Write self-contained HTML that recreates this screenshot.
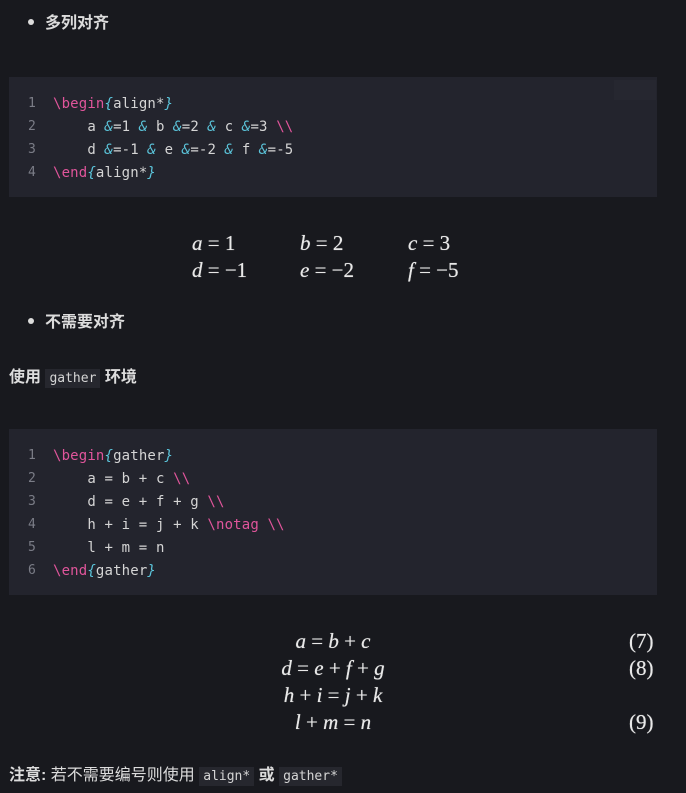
<!DOCTYPE html>
<html><head><meta charset="utf-8"><style>
body{margin:0;background:#18191e;color:#d8d8d8;font-family:"Liberation Sans","Noto Sans CJK SC",sans-serif;width:686px;height:793px;overflow:hidden;position:relative}
.a{position:absolute;white-space:nowrap}
.t{font-size:16px;font-weight:bold;color:#dcdcdc}
.dot{position:absolute;width:6px;height:6px;border-radius:50%;background:#dcdcdc}
.code{position:absolute;left:9px;width:648px;background:#23242d}
.ln{position:absolute;left:28px;font-family:"DejaVu Sans Mono",monospace;font-size:13px;color:#7b7d87}
.cl{position:absolute;left:53px;font-family:"DejaVu Sans Mono",monospace;font-size:14px;letter-spacing:0.15px;color:#d5d5d5;white-space:pre}
.k{color:#e0559b}.b{color:#5bc4da;font-style:italic}
.m{font-family:"Liberation Serif",serif;font-size:21px;color:#e8e8e8;text-shadow:0 0 0.6px #e8e8e8}
.m i{font-style:italic}
.ic{font-family:"DejaVu Sans Mono",monospace;font-size:13px;background:#26272e;padding:2px 4px;font-weight:normal;color:#d5d5d5}
</style></head><body>
<div class="dot" style="left:28px;top:19px"></div>
<div class="a t" style="left:45px;top:9px">多列对齐</div>

<div class="code" style="top:77px;height:120px"></div>
<div style="position:absolute;left:614px;top:80px;width:42px;height:20px;background:#262730"></div>
<div class="ln" style="top:96px">1</div><div class="cl" style="top:96px"><span class="k">\begin</span><span class="b">{</span>align*<span class="b">}</span></div>
<div class="ln" style="top:119px">2</div><div class="cl" style="top:119px">    a <span class="b">&amp;</span>=1 <span class="b">&amp;</span> b <span class="b">&amp;</span>=2 <span class="b">&amp;</span> c <span class="b">&amp;</span>=3 <span class="k">\\</span></div>
<div class="ln" style="top:142px">3</div><div class="cl" style="top:142px">    d <span class="b">&amp;</span>=-1 <span class="b">&amp;</span> e <span class="b">&amp;</span>=-2 <span class="b">&amp;</span> f <span class="b">&amp;</span>=-5</div>
<div class="ln" style="top:165px">4</div><div class="cl" style="top:165px"><span class="k">\end</span><span class="b">{</span>align*<span class="b">}</span></div>

<div class="a m" style="left:192px;top:231px"><i>a</i> = 1</div>
<div class="a m" style="left:300px;top:231px"><i>b</i> = 2</div>
<div class="a m" style="left:408px;top:231px"><i>c</i> = 3</div>
<div class="a m" style="left:192px;top:258px"><i>d</i> = −1</div>
<div class="a m" style="left:300px;top:258px"><i>e</i> = −2</div>
<div class="a m" style="left:408px;top:258px"><i>f</i> = −5</div>

<div class="dot" style="left:28px;top:318px"></div>
<div class="a t" style="left:45px;top:308px">不需要对齐</div>
<div class="a t" style="left:9px;top:363px">使用 <span class="ic">gather</span> 环境</div>

<div class="code" style="top:429px;height:166px"></div>
<div class="ln" style="top:448px">1</div><div class="cl" style="top:448px"><span class="k">\begin</span><span class="b">{</span>gather<span class="b">}</span></div>
<div class="ln" style="top:471px">2</div><div class="cl" style="top:471px">    a = b + c <span class="k">\\</span></div>
<div class="ln" style="top:494px">3</div><div class="cl" style="top:494px">    d = e + f + g <span class="k">\\</span></div>
<div class="ln" style="top:517px">4</div><div class="cl" style="top:517px">    h + i = j + k <span class="k">\notag \\</span></div>
<div class="ln" style="top:540px">5</div><div class="cl" style="top:540px">    l + m = n</div>
<div class="ln" style="top:563px">6</div><div class="cl" style="top:563px"><span class="k">\end</span><span class="b">{</span>gather<span class="b">}</span></div>

<div class="a m" style="left:0;width:666px;text-align:center;top:629px"><i>a</i> = <i>b</i> + <i>c</i></div>
<div class="a m" style="left:0;width:666px;text-align:center;top:656px"><i>d</i> = <i>e</i> + <i>f</i> + <i>g</i></div>
<div class="a m" style="left:0;width:666px;text-align:center;top:683px"><i>h</i> + <i>i</i> = <i>j</i> + <i>k</i></div>
<div class="a m" style="left:0;width:666px;text-align:center;top:710px"><i>l</i> + <i>m</i> = <i>n</i></div>
<div class="a m" style="left:629px;top:629px">(7)</div>
<div class="a m" style="left:629px;top:656px">(8)</div>
<div class="a m" style="left:629px;top:710px">(9)</div>

<div class="a t" style="left:9px;top:761px">注意: <span style="font-weight:normal">若不需要编号则使用</span> <span class="ic">align*</span> 或 <span class="ic">gather*</span></div>
</body></html>
